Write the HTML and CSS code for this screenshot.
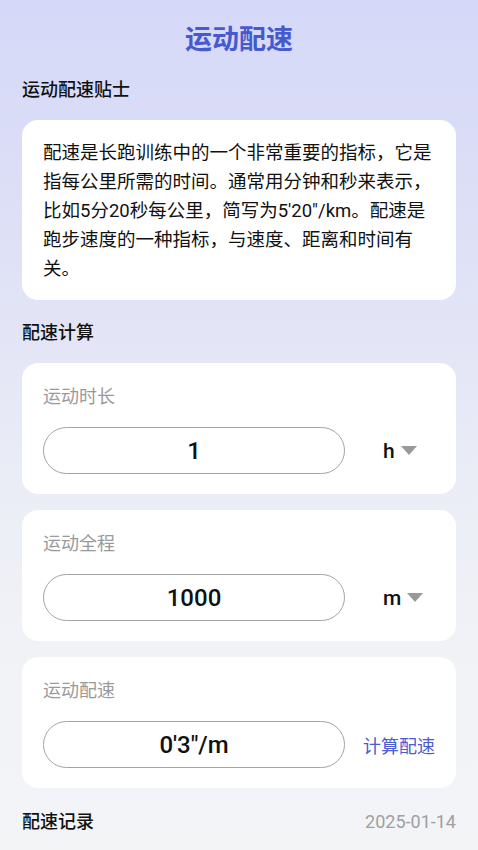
FILE: index.html
```html
<!DOCTYPE html>
<html lang="zh-CN">
<head>
<meta charset="utf-8">
<title>运动配速</title>
<link rel="stylesheet" href="styles.css">
</head>
<body>
<div class="page">
  <h1 class="title">运动配速</h1>

  <h2 class="section">运动配速贴士</h2>
  <div class="card tips">
    <p>配速是长跑训练中的一个非常重要的指标，它是指每公里所需的时间。通常用分钟和秒来表示，比如5分20秒每公里，简写为5'20"/km。配速是跑步速度的一种指标，与速度、距离和时间有关。</p>
  </div>

  <h2 class="section section-calc">配速计算</h2>

  <div class="card field">
    <div class="label">运动时长</div>
    <div class="row">
      <div class="pill">1</div>
      <div class="side unit"><span>h</span><i class="caret"></i></div>
    </div>
  </div>

  <div class="card field">
    <div class="label">运动全程</div>
    <div class="row">
      <div class="pill">1000</div>
      <div class="side unit"><span>m</span><i class="caret"></i></div>
    </div>
  </div>

  <div class="card field">
    <div class="label">运动配速</div>
    <div class="row">
      <div class="pill">0'3"/m</div>
      <div class="side action">计算配速</div>
    </div>
  </div>

  <div class="records">
    <h2 class="section">配速记录</h2>
    <span class="date">2025-01-14</span>
  </div>
</div>
</body>
</html>
```

FILE: styles.css
```css
* { box-sizing: border-box; }
html, body { margin: 0; padding: 0; }
body {
  width: 478px;
  min-height: 850px;
  font-family: Roboto, "Noto Sans CJK SC", sans-serif;
  color: #111;
  background: linear-gradient(180deg, #d5d8f8 0%, #dfe1f6 30%, #eceef6 60%, #f2f3f6 80%, #f3f4f6 100%);
}
.page {
  padding: 22px 22px 0;
  display: flex;
  flex-direction: column;
}
.title {
  margin: 0;
  height: 36px;
  line-height: 36px;
  text-align: center;
  font-size: 27px;
  font-weight: 700;
  color: #4759cf;
}
.section {
  margin: 20px 0 0;
  font-size: 18px;
  line-height: 24px;
  font-weight: 500;
  color: #111;
}
.section-calc { margin-top: 21px; }
.card {
  background: #fff;
  border-radius: 16px;
}
.tips {
  margin-top: 18px;
  padding: 19px 21px 16px;
}
.tips p {
  margin: 0;
  font-size: 18.5px;
  line-height: 29px;
  color: #111;
}
.field {
  margin-top: 16px;
  padding: 24px 21px 20px;
  height: 131px;
}
.section-calc + .field { margin-top: 18px; }
.label {
  font-size: 18px;
  line-height: 20px;
  color: #9a9a9a;
}
.row {
  margin-top: 20px;
  display: flex;
  align-items: center;
}
.pill {
  width: 302px;
  height: 47px;
  border: 1px solid #a3a3a3;
  border-radius: 24px;
  display: flex;
  align-items: center;
  justify-content: center;
  font-size: 24px;
  line-height: 28px;
  font-weight: 500;
  color: #111;
}
.side { flex: 1; }
.unit {
  display: flex;
  align-items: center;
  padding-left: 38px;
  font-size: 21px;
  font-weight: 500;
  color: #111;
}
.caret {
  margin-left: 6px;
  width: 0;
  height: 0;
  border-left: 8px solid transparent;
  border-right: 8px solid transparent;
  border-top: 9px solid #999;
}
.action {
  text-align: right;
  font-size: 18px;
  color: #4a5ccf;
}
.records {
  margin-top: 22px;
  display: flex;
  justify-content: space-between;
  align-items: center;
}
.records .section { margin: 0; }
.date {
  font-size: 18px;
  line-height: 24px;
  color: #a0a0a0;
}
```
